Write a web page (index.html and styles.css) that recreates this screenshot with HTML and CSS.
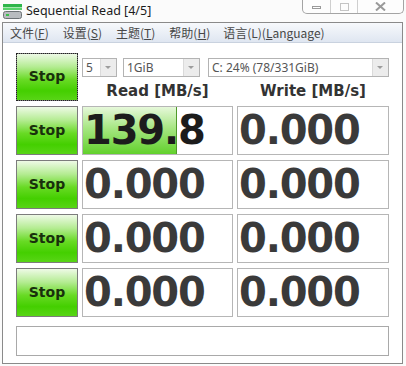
FILE: index.html
```html
<!DOCTYPE html>
<html lang="zh">
<head>
<meta charset="UTF-8">
<title>Sequential Read [4/5]</title>
<link rel="stylesheet" href="styles.css">
</head>
<body>
<div class="window">
    <div class="titlebar">
        <svg class="app-icon" width="19" height="15" viewBox="0 0 19 15">
            <rect x="0" y="0" width="19" height="3" fill="#2fb54a" />
            <rect x="0" y="3.5" width="19" height="2.5" fill="#58d36a" />
            <rect x="0.5" y="7.5" width="18" height="7" rx="2" fill="#b9bcbf" stroke="#6d7275" />
            <rect x="3" y="10" width="3" height="2" fill="#3cc04c" />
        </svg>
        <span class="title">Sequential Read [4/5]</span>
        <div class="caption-buttons">
            <span class="cap-btn cap-min"><i></i></span>
            <span class="cap-btn cap-max"><i></i></span>
            <span class="cap-btn cap-close">
                <svg width="11" height="9" viewBox="0 0 11 9">
                    <path d="M1 0.5 L10 8.5 M10 0.5 L1 8.5" stroke="#9a9a9a" stroke-width="2" fill="none" />
                </svg>
            </span>
        </div>
    </div>

    <div class="client">
        <div class="menubar">
            <span class="menu-item">文件(<u>F</u>)</span>
            <span class="menu-item">设置(<u>S</u>)</span>
            <span class="menu-item">主题(<u>T</u>)</span>
            <span class="menu-item">帮助(<u>H</u>)</span>
            <span class="menu-item">语言(L)(<u>L</u>anguage)</span>
        </div>

        <div class="bench">
            <button class="stop focused">Stop</button>
            <div class="controls">
                <div class="combos">
                    <div class="combo combo-count"><span>5</span><i class="arrow"></i></div>
                    <div class="combo combo-size"><span>1GiB</span><i class="arrow"></i></div>
                    <div class="combo combo-drive"><span>C: 24% (78/331GiB)</span><i class="arrow"></i></div>
                </div>
                <div class="headers">
                    <span>Read [MB/s]</span>
                    <span>Write [MB/s]</span>
                </div>
            </div>

            <button class="stop">Stop</button>
            <div class="value"><div class="fill" style="width: 62.5%"></div><span class="active">139.8</span></div>
            <div class="value"><span>0.000</span></div>

            <button class="stop">Stop</button>
            <div class="value"><span>0.000</span></div>
            <div class="value"><span>0.000</span></div>

            <button class="stop">Stop</button>
            <div class="value"><span>0.000</span></div>
            <div class="value"><span>0.000</span></div>

            <button class="stop">Stop</button>
            <div class="value"><span>0.000</span></div>
            <div class="value"><span>0.000</span></div>
        </div>

        <div class="comment"></div>
    </div>
</div>
</body>
</html>
```

FILE: styles.css
```css
body {
    margin: 0;
    background: #fff;
    font-family: "Noto Sans", sans-serif;
}

.window {
    width: 406px;
    height: 366px;
    display: flex;
    flex-direction: column;
    background: #fbfbfb;
    overflow: hidden;
}

/* Title bar */
.titlebar {
    height: 22px;
    display: flex;
    align-items: flex-start;
    position: relative;
}

.app-icon {
    margin: 4px 0 0 3px;
}

.title {
    margin-left: 4px;
    margin-top: 2px;
    font-size: 12.5px;
    line-height: 17px;
    color: #1c1c1c;
}

.caption-buttons {
    position: absolute;
    top: 0;
    left: 302px;
    width: 100px;
    height: 13px;
    display: flex;
    border: 1px solid #a4a4a4;
    border-top: none;
    border-radius: 0 0 5px 5px;
    background: #fdfdfd;
}

.cap-btn {
    display: flex;
    justify-content: center;
    align-items: center;
    border-right: 1px solid #cfcfcf;
}

.cap-min { width: 27px; }
.cap-max { width: 26px; }
.cap-close { flex: 1; border-right: none; }

.cap-min i {
    width: 9px;
    height: 3px;
    border: 1px solid #9a9a9a;
    box-sizing: border-box;
    margin-top: 1px;
}

.cap-max i {
    width: 9px;
    height: 8px;
    border: 1px solid #c4c4c4;
    box-sizing: border-box;
}

/* Client area */
.client {
    flex: 1;
    margin: 0 3px 2px 2px;
    border: 1px solid #8a8a8a;
    background: #fff;
    display: flex;
    flex-direction: column;
}

.menubar {
    height: 19px;
    display: flex;
    align-items: center;
    background: linear-gradient(#f7f9fc, #dfe6f1);
    border-bottom: 1px solid #c9d2df;
}

.menu-item {
    padding: 0 7px;
    font-family: "Noto Sans CJK SC", "Noto Sans", sans-serif;
    font-size: 12px;
    color: #474747;
}

.menu-item:last-child {
    padding-left: 6px;
}

.menu-item u {
    text-decoration-thickness: 1px;
    text-underline-offset: 1px;
}

/* Benchmark grid */
.bench {
    margin: 10px 0 0 13px;
    display: grid;
    grid-template-columns: 62px 151px 152px;
    grid-template-rows: 48px repeat(4, 49px);
    column-gap: 4px;
    row-gap: 5px;
}

.stop {
    margin: 0;
    padding: 0 0 2px;
    border: 1px solid #7c7c7c;
    background: linear-gradient(#eefae6 0%, #b4ec92 28%, #68da24 56%, #44cf00 80%, #58d516 100%);
    font-family: "DejaVu Sans", sans-serif;
    font-weight: bold;
    font-size: 14px;
    color: #18300c;
}

.stop.focused {
    outline: 1px dotted #222;
    outline-offset: -1px;
}

.controls {
    grid-column: 2 / span 2;
    display: flex;
    flex-direction: column;
}

.combos {
    margin-top: 5px;
    height: 19px;
    display: flex;
}

.combo {
    height: 19px;
    box-sizing: border-box;
    border: 1px solid #b3b3b3;
    display: flex;
    align-items: center;
    justify-content: space-between;
    font-size: 12px;
    color: #555;
    background: #fff;
}

.combo span {
    padding-left: 3px;
}

.combo-count { width: 35px; }
.combo-size { width: 77px; margin-left: 6px; }
.combo-drive { width: 181px; margin-left: 8px; }

.arrow {
    width: 15px;
    height: 17px;
    background: #ececec;
    border-left: 1px solid #dadada;
    position: relative;
}

.arrow::after {
    content: "";
    position: absolute;
    left: 4px;
    top: 7px;
    border-left: 3px solid transparent;
    border-right: 3px solid transparent;
    border-top: 3px solid #9c9c9c;
}

.headers {
    display: grid;
    grid-template-columns: 151px 152px;
    column-gap: 4px;
    margin-top: 5px;
}

.headers span {
    text-align: center;
    font-family: "DejaVu Sans", sans-serif;
    font-weight: bold;
    font-size: 15px;
    color: #333;
}

.value {
    position: relative;
    border: 1px solid #b6b6b6;
    background: #fff;
    overflow: hidden;
}

.value .fill {
    position: absolute;
    left: 0;
    top: 0;
    bottom: 0;
    background: linear-gradient(#e6f8da, #a6e682 45%, #62d12c);
    border-right: 1px solid #4f9a2a;
}

.value span {
    position: relative;
    display: block;
    padding-left: 1px;
    font-family: "DejaVu Sans", sans-serif;
    font-weight: bold;
    font-size: 40px;
    letter-spacing: -1.2px;
    line-height: 47px;
    color: #3a3a3a;
}

.value span.active {
    color: #1c1c1c;
}

.comment {
    margin: 9px 0 0 13px;
    width: 373px;
    height: 30px;
    box-sizing: border-box;
    border: 1px solid #a9a9a9;
    background: #fff;
}
```
